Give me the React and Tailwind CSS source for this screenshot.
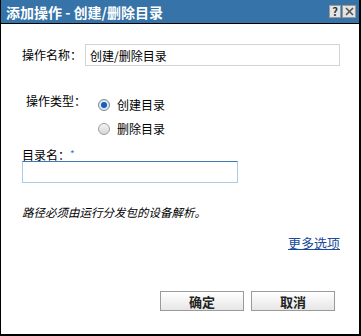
import React, { useState } from "react";

const font = { fontFamily: '"Noto Sans CJK SC", "Liberation Sans", sans-serif' };

const Radio = ({ checked, onClick, label }) => (
  <button type="button" onClick={onClick} className="flex items-center gap-[7px] text-[12px] leading-[18px] text-black">
    <span
      className={`flex items-center justify-center w-[12px] h-[12px] rounded-full border ${
        checked ? "border-[#7a8a9a] bg-[#dfe6ee]" : "border-[#a0a0a0] bg-gradient-to-b from-[#f4f4f4] to-[#d6d6d6]"
      }`}
    >
      {checked && <span className="w-[6px] h-[6px] rounded-full bg-[#1560b8]" />}
    </span>
    {label}
  </button>
);

const App = () => {
  const [type, setType] = useState("create");
  const [name, setName] = useState("创建/删除目录");
  const [dir, setDir] = useState("");

  return (
    <div style={font} className="w-[361px] h-[336px] bg-white flex flex-col border-l border-r-2 border-b-2 border-black">
      {/* Title bar */}
      <div className="h-[24px] bg-[#3673a8] border-b border-black flex items-center justify-between pl-[5px] pr-[3px]">
        <span className="text-white font-bold text-[14px] leading-none">添加操作 - 创建/删除目录</span>
        <div className="flex gap-[1px]">
          <span className="w-[12px] h-[13px] bg-[#e4e4e4] border border-[#9a9a9a] flex items-center justify-center text-[11px] font-bold text-[#333] leading-none">?</span>
          <span className="w-[14px] h-[13px] bg-[#e4e4e4] border border-[#9a9a9a] flex items-center justify-center">
            <svg width="9" height="9" viewBox="0 0 9 9">
              <path d="M1 1 L8 8 M8 1 L1 8" stroke="#555" strokeWidth="1.6" />
            </svg>
          </span>
        </div>
      </div>

      {/* Content */}
      <div className="flex-1 flex flex-col pl-[21px] pr-[19px] pb-[23px] text-[12px] text-black">
        <div className="flex items-center mt-[20px] h-[22px]">
          <span className="w-[63px]">操作名称：</span>
          <input
            value={name}
            onChange={(e) => setName(e.target.value)}
            className="flex-1 h-[22px] px-[4px] border border-[#d4d4d4] outline-none text-[12px]"
          />
        </div>

        <div className="flex mt-[26px]">
          <span className="w-[76px] pl-[4px]">操作类型：</span>
          <div className="flex flex-col gap-[6px] mt-[4px]">
            <Radio checked={type === "create"} onClick={() => setType("create")} label="创建目录" />
            <Radio checked={type === "delete"} onClick={() => setType("delete")} label="删除目录" />
          </div>
        </div>

        <div className="mt-[11px] leading-none">
          目录名：<span className="text-[#3a78c8] text-[10px] align-top">*</span>
        </div>
        <input
          value={dir}
          onChange={(e) => setDir(e.target.value)}
          className="mt-0 w-[216px] h-[22px] px-[4px] border border-[#a9cbe3] border-t-[#3d7ab5] outline-none text-[12px]"
        />

        <p className="mt-[21px] italic text-[11.5px]">路径必须由运行分发包的设备解析。</p>

        <div className="flex justify-end mt-[12px]">
          <a href="#" className="text-[#1a4a9c] underline text-[13px]">更多选项</a>
        </div>

        <div className="flex justify-end gap-[7px] mt-auto pr-[5px]">
          <button className="w-[84px] h-[20px] border border-[#9a9a9a] bg-gradient-to-b from-white to-[#e6e6e6] font-bold text-[13px] leading-none text-[#222]">
            确定
          </button>
          <button className="w-[84px] h-[20px] border border-[#9a9a9a] bg-gradient-to-b from-white to-[#e6e6e6] font-bold text-[13px] leading-none text-[#222]">
            取消
          </button>
        </div>
      </div>
    </div>
  );
};

export default App;
